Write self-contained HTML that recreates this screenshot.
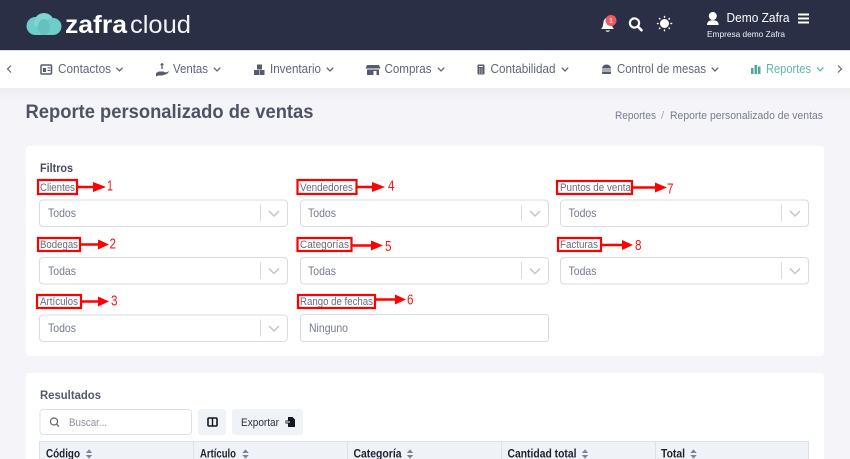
<!DOCTYPE html>
<html lang="es"><head><meta charset="utf-8"><title>Reporte personalizado de ventas</title>
<style>
html,body{margin:0;padding:0;background:#f5f5f9;overflow:hidden}
svg{display:block}
text{font-family:"Liberation Sans",sans-serif}
.nav{font-size:12.5px;fill:#5f6479}
.lab{font-size:10.8px;fill:#666b80}
.val{font-size:11.8px;fill:#757a90}
.th{font-size:11.5px;font-weight:bold;fill:#1d2130}
.num{font-size:14.5px;fill:#f01818}
</style></head><body>
<svg width="850" height="459" viewBox="0 0 850 459" xmlns="http://www.w3.org/2000/svg">
<defs>
<linearGradient id="g" x1="0" y1="0" x2="0" y2="1"><stop offset="0" stop-color="#eeeef1"/><stop offset="1" stop-color="#f5f5f9"/></linearGradient>
<g id="chev"><path d="M-3.200 -1.800 L0 1.400 L3.200 -1.800" fill="none" stroke="#5f6479" stroke-width="1.300"/></g>
<g id="sort" fill="#7d8294"><path d="M-3.200 -1 L0 -4.600 L3.200 -1Z"/><path d="M-3.200 1 L0 4.600 L3.200 1Z"/></g>
<g id="sel"><rect x=".5" y=".5" width="248" height="26.500" rx="3.500" fill="#fff" stroke="#d8dbe3"/><path d="M221.500 5V22" stroke="#d8dbe3"/><path d="M230 11.500l5 5 5-5" fill="none" stroke="#c2c5cc" stroke-width="1.500"/></g>
</defs>

<rect width="850" height="459" fill="#f5f5f9"/>
<rect y="88" width="850" height="14" fill="url(#g)"/>
<!-- header -->
<rect width="850" height="50" fill="#2a2f45"/>
<rect y="50" width="850" height="38" fill="#fff"/>
<rect y="50" width="850" height="1" fill="#dcdde0"/>
<!-- logo -->
<g fill="#6fcdc9">
<circle cx="35.500" cy="26" r="9"/><circle cx="44" cy="23" r="10" fill="#7fd6d0"/><circle cx="53" cy="26.500" r="8.500"/>
<rect x="35.500" y="26" width="17.500" height="9"/><ellipse cx="44" cy="27" rx="6" ry="8" fill="#62c2bf"/>
</g>
<text x="65" y="33" font-size="25" font-weight="bold" fill="#fff" textLength="62" lengthAdjust="spacingAndGlyphs">zafra</text>
<text x="130" y="33" font-size="25" fill="#f1f2f4" textLength="61" lengthAdjust="spacingAndGlyphs">cloud</text>
<!-- bell -->
<path d="M601 29c2-2 2-4 2.500-7 .5-3 2.500-4.500 4-4.500s3.500 1.500 4 4.500c.5 3 .5 5 2.500 7z" fill="#fff"/><path d="M605.500 30.500a2.500 2.500 0 0 0 4.500 0z" fill="#fff"/>
<circle cx="611" cy="20.500" r="5.500" fill="#ee5a5f"/><text x="611" y="23" font-size="7" fill="#fff" text-anchor="middle">1</text>
<!-- search -->
<circle cx="634.500" cy="23" r="4.600" fill="none" stroke="#fff" stroke-width="2.200"/><path d="M637.800 26.500l3.700 3.700" stroke="#fff" stroke-width="2.600" stroke-linecap="round"/>
<!-- sun -->
<circle cx="664.500" cy="23.500" r="4.500" fill="#fff"/>
<g stroke="#fff" stroke-width="1.500" stroke-linecap="round"><path d="M664.500 16.500v.6M664.500 30v.6M657.500 23.500h.6M671 23.500h.6M659.500 18.500l.4.4M669 28l.4.4M659.500 28.500l.4-.4M669 19l.4-.4"/></g>
<!-- user -->
<circle cx="712.800" cy="16" r="4" fill="#fff"/><path d="M707 25c0-3.800 2.500-4.800 5.800-4.800s5.800 1 5.800 4.800z" fill="#fff"/>
<text x="726.500" y="22" font-size="12.500" fill="#fff" textLength="63" lengthAdjust="spacingAndGlyphs">Demo Zafra</text>
<text x="707" y="37" font-size="8.500" fill="#f0f1f4" textLength="78" lengthAdjust="spacingAndGlyphs">Empresa demo Zafra</text>
<path d="M798 13.500h11v2h-11zM798 17.500h11v2h-11zM798 21.500h11v2h-11z" fill="#fff"/>

<!-- nav -->
<path d="M11 65.500L7.500 69l3.500 3.500" fill="none" stroke="#5f6479" stroke-width="1.200"/>
<path d="M838 65.500l3.500 3.500L838 72.500" fill="none" stroke="#5f6479" stroke-width="1.200"/>
<!-- contactos icon -->
<rect x="41" y="65" width="10.500" height="9" rx="1" fill="none" stroke="#555a6e" stroke-width="1.500"/><rect x="43" y="68" width="3" height="4" fill="#555a6e"/><path d="M47.500 68h3M47.500 70.500h3" stroke="#555a6e"/>
<text class="nav" x="58" y="73" textLength="53" lengthAdjust="spacingAndGlyphs">Contactos</text><use href="#chev" x="119.500" y="69.500"/>
<!-- ventas icon -->
<path d="M156 73l3-1.500h4l3 1 3.500-1.500-2.500 3-5 1.500h-3.500l-2.500 1z" fill="#555a6e"/><path d="M160.500 64.500h3M162 63v6" stroke="#555a6e" stroke-width="1.300"/>
<text class="nav" x="173" y="73" textLength="35" lengthAdjust="spacingAndGlyphs">Ventas</text><use href="#chev" x="217" y="69.500"/>
<!-- inventario icon -->
<path d="M254 70h5v5h-5zM259.500 70h5v5h-5zM257 64.500h5v5h-5z" fill="#555a6e"/>
<text class="nav" x="270" y="73" textLength="51" lengthAdjust="spacingAndGlyphs">Inventario</text><use href="#chev" x="330" y="69.500"/>
<!-- compras icon -->
<path d="M367 65h12l1.500 3.500h-15zM367 69.500h12v5.500h-2.500v-4h-3v4H367z" fill="#555a6e"/>
<text class="nav" x="384.500" y="73" textLength="47" lengthAdjust="spacingAndGlyphs">Compras</text><use href="#chev" x="441" y="69.500"/>
<!-- contabilidad icon -->
<rect x="477.500" y="64.500" width="7" height="10" rx="1" fill="#555a6e"/><path d="M479 66.500h4" stroke="#fff"/><path d="M479 69h4M479 71h4M479 73h4" stroke="#fff" stroke-dasharray="1 .7" stroke-width=".8"/>
<text class="nav" x="490.500" y="73" textLength="65" lengthAdjust="spacingAndGlyphs">Contabilidad</text><use href="#chev" x="565" y="69.500"/>
<!-- mesas icon -->
<path d="M602 68.500a4.500 4 0 0 1 9 0zM602 69.500h9v1h-9zM602 71.500h9v1.500a1 1 0 0 1-1 1h-7a1 1 0 0 1-1-1z" fill="#555a6e"/>
<text class="nav" x="617" y="73" textLength="89" lengthAdjust="spacingAndGlyphs">Control de mesas</text><use href="#chev" x="715" y="69.500"/>
<!-- reportes icon -->
<path d="M751 68h2.500v6H751zM754.500 65h2.500v9h-2.500zM758 66.500h2.500V74H758z" fill="#4fa8a0"/>
<text x="766" y="73" font-size="12.500" fill="#5fb5ad" textLength="45" lengthAdjust="spacingAndGlyphs">Reportes</text>
<path d="M817 67.500l3.200 3.200 3.200-3.200" fill="none" stroke="#5fb5ad" stroke-width="1.300"/>

<!-- title -->
<text x="25.500" y="118" font-size="19.500" font-weight="bold" fill="#4e5364" textLength="288" lengthAdjust="spacingAndGlyphs">Reporte personalizado de ventas</text>
<text x="615" y="119" font-size="11.300" fill="#777c90" textLength="41" lengthAdjust="spacingAndGlyphs">Reportes</text>
<text x="661" y="119" font-size="11" fill="#a5a8b5">/</text>
<text x="670" y="119" font-size="11.300" fill="#777c90" textLength="153" lengthAdjust="spacingAndGlyphs">Reporte personalizado de ventas</text>

<!-- filtros card -->
<rect x="26" y="146" width="798" height="210" rx="3" fill="#fff"/>
<text x="40" y="172" font-size="12" font-weight="bold" fill="#474c5e" textLength="33" lengthAdjust="spacingAndGlyphs">Filtros</text>

<use href="#sel" x="39" y="199.500"/><use href="#sel" x="300" y="199.500"/><use href="#sel" x="560" y="199.500"/>
<use href="#sel" x="39" y="257"/><use href="#sel" x="300" y="257"/><use href="#sel" x="560" y="257"/>
<use href="#sel" x="39" y="314.500"/>
<rect x="300.500" y="314.500" width="248" height="27" rx="3" fill="#fff" stroke="#d8dbe3"/>

<text class="val" x="48" y="217" textLength="28" lengthAdjust="spacingAndGlyphs">Todos</text>
<text class="val" x="308" y="217" textLength="28" lengthAdjust="spacingAndGlyphs">Todos</text>
<text class="val" x="568.500" y="217" textLength="28" lengthAdjust="spacingAndGlyphs">Todos</text>
<text class="val" x="48" y="275" textLength="28" lengthAdjust="spacingAndGlyphs">Todas</text>
<text class="val" x="308" y="275" textLength="28" lengthAdjust="spacingAndGlyphs">Todas</text>
<text class="val" x="568.500" y="275" textLength="28" lengthAdjust="spacingAndGlyphs">Todas</text>
<text class="val" x="48" y="332" textLength="28" lengthAdjust="spacingAndGlyphs">Todos</text>
<text class="val" x="309" y="332" textLength="39" lengthAdjust="spacingAndGlyphs">Ninguno</text>

<!-- labels -->
<text class="lab" x="40" y="191" textLength="35" lengthAdjust="spacingAndGlyphs">Clientes</text>
<text class="lab" x="300" y="191" textLength="53" lengthAdjust="spacingAndGlyphs">Vendedores</text>
<text class="lab" x="560" y="191" textLength="71" lengthAdjust="spacingAndGlyphs">Puntos de venta</text>
<text class="lab" x="40" y="248" textLength="38" lengthAdjust="spacingAndGlyphs">Bodegas</text>
<text class="lab" x="300" y="248" textLength="49" lengthAdjust="spacingAndGlyphs">Categorías</text>
<text class="lab" x="560" y="248" textLength="38" lengthAdjust="spacingAndGlyphs">Facturas</text>
<text class="lab" x="40" y="305" textLength="38" lengthAdjust="spacingAndGlyphs">Artículos</text>
<text class="lab" x="300" y="305" textLength="73" lengthAdjust="spacingAndGlyphs">Rango de fechas</text>

<!-- annotations -->
<g fill="none" stroke="#f00" stroke-width="2.200">
<rect x="38" y="180" width="39" height="14"/>
<rect x="297.500" y="180" width="59" height="14"/>
<rect x="557" y="181" width="75" height="13"/>
<rect x="38" y="238" width="42" height="13"/>
<rect x="297.500" y="238" width="54" height="13"/>
<rect x="558" y="238" width="43" height="13"/>
<rect x="37" y="295" width="44" height="13"/>
<rect x="298" y="295" width="77" height="13"/>
</g>
<g fill="#f00">
<path d="M77 185.800h16v-3.800l13 5-13 5v-3.800H77z"/>
<path d="M356 185.800h16v-3.800l13 5-13 5v-3.800h-16z"/>
<path d="M632 186.300h23v-3.800l12 5-12 5v-3.800h-23z"/>
<path d="M80 243.300h18v-3.800l11 5-11 5v-3.800H80z"/>
<path d="M351 244.300h20v-3.800l12 5-12 5v-3.800h-20z"/>
<path d="M601 243.800h21v-3.800l11 5-11 5v-3.800h-21z"/>
<path d="M81 300.300h17v-3.800l11 5-11 5v-3.800H81z"/>
<path d="M375 298.300h20v-3.800l11 5-11 5v-3.800h-20z"/>
</g>
<text class="num" x="107" y="190.500" textLength="6" lengthAdjust="spacingAndGlyphs">1</text>
<text class="num" x="388" y="190.500" textLength="6.500" lengthAdjust="spacingAndGlyphs">4</text>
<text class="num" x="667" y="193.500" textLength="6.500" lengthAdjust="spacingAndGlyphs">7</text>
<text class="num" x="109.500" y="248.500" textLength="6.500" lengthAdjust="spacingAndGlyphs">2</text>
<text class="num" x="385" y="251" textLength="6.500" lengthAdjust="spacingAndGlyphs">5</text>
<text class="num" x="635" y="250" textLength="6.500" lengthAdjust="spacingAndGlyphs">8</text>
<text class="num" x="111" y="305.500" textLength="6.500" lengthAdjust="spacingAndGlyphs">3</text>
<text class="num" x="407" y="304.500" textLength="6.500" lengthAdjust="spacingAndGlyphs">6</text>

<!-- resultados card -->
<rect x="26" y="373" width="798" height="90" rx="3" fill="#fff"/>
<text x="40" y="399" font-size="12" font-weight="bold" fill="#555a6c" textLength="61" lengthAdjust="spacingAndGlyphs">Resultados</text>
<rect x="40" y="409.500" width="151.500" height="25" rx="3" fill="#fff" stroke="#dcdfe6"/>
<circle cx="54" cy="421.500" r="3.600" fill="none" stroke="#555a6e" stroke-width="1.100"/><path d="M56.700 424.300l2.300 2.300" stroke="#555a6e" stroke-width="1.200"/>
<text x="69" y="426" font-size="11.300" fill="#8b8fa0" textLength="38" lengthAdjust="spacingAndGlyphs">Buscar...</text>
<rect x="198" y="409" width="28" height="26" rx="3" fill="#eff2f7"/>
<rect x="208" y="418" width="9" height="8" rx="1" fill="none" stroke="#14171f" stroke-width="1.600"/><path d="M212.500 418v8" stroke="#14171f" stroke-width="1.400"/>
<rect x="232" y="409" width="71" height="26" rx="3" fill="#eff2f7"/>
<text x="241" y="426" font-size="11.300" fill="#2d3140" textLength="38" lengthAdjust="spacingAndGlyphs">Exportar</text>
<path d="M288 417h4.500l2.500 2.500v7.500h-7v-3.500h-2.500v-3H288z" fill="#14171f"/><path d="M286 422h4" stroke="#fff"/>

<!-- table -->
<rect x="39.500" y="441.500" width="769" height="20" fill="#eff2f7" stroke="#dde0e6"/>
<path d="M193.500 441v18M347.500 441v18M501.500 441v18M655.500 441v18" stroke="#dde0e6"/>
<text class="th" x="46" y="457.500" textLength="34" lengthAdjust="spacingAndGlyphs">Código</text><use href="#sort" x="89" y="454"/>
<text class="th" x="200" y="457.500" textLength="36" lengthAdjust="spacingAndGlyphs">Artículo</text><use href="#sort" x="245.500" y="454"/>
<text class="th" x="353.500" y="457.500" textLength="48" lengthAdjust="spacingAndGlyphs">Categoría</text><use href="#sort" x="410" y="454"/>
<text class="th" x="507.500" y="457.500" textLength="69" lengthAdjust="spacingAndGlyphs">Cantidad total</text><use href="#sort" x="585" y="454"/>
<text class="th" x="661" y="457.500" textLength="24" lengthAdjust="spacingAndGlyphs">Total</text><use href="#sort" x="693.500" y="454"/>
</svg>
</body></html>
